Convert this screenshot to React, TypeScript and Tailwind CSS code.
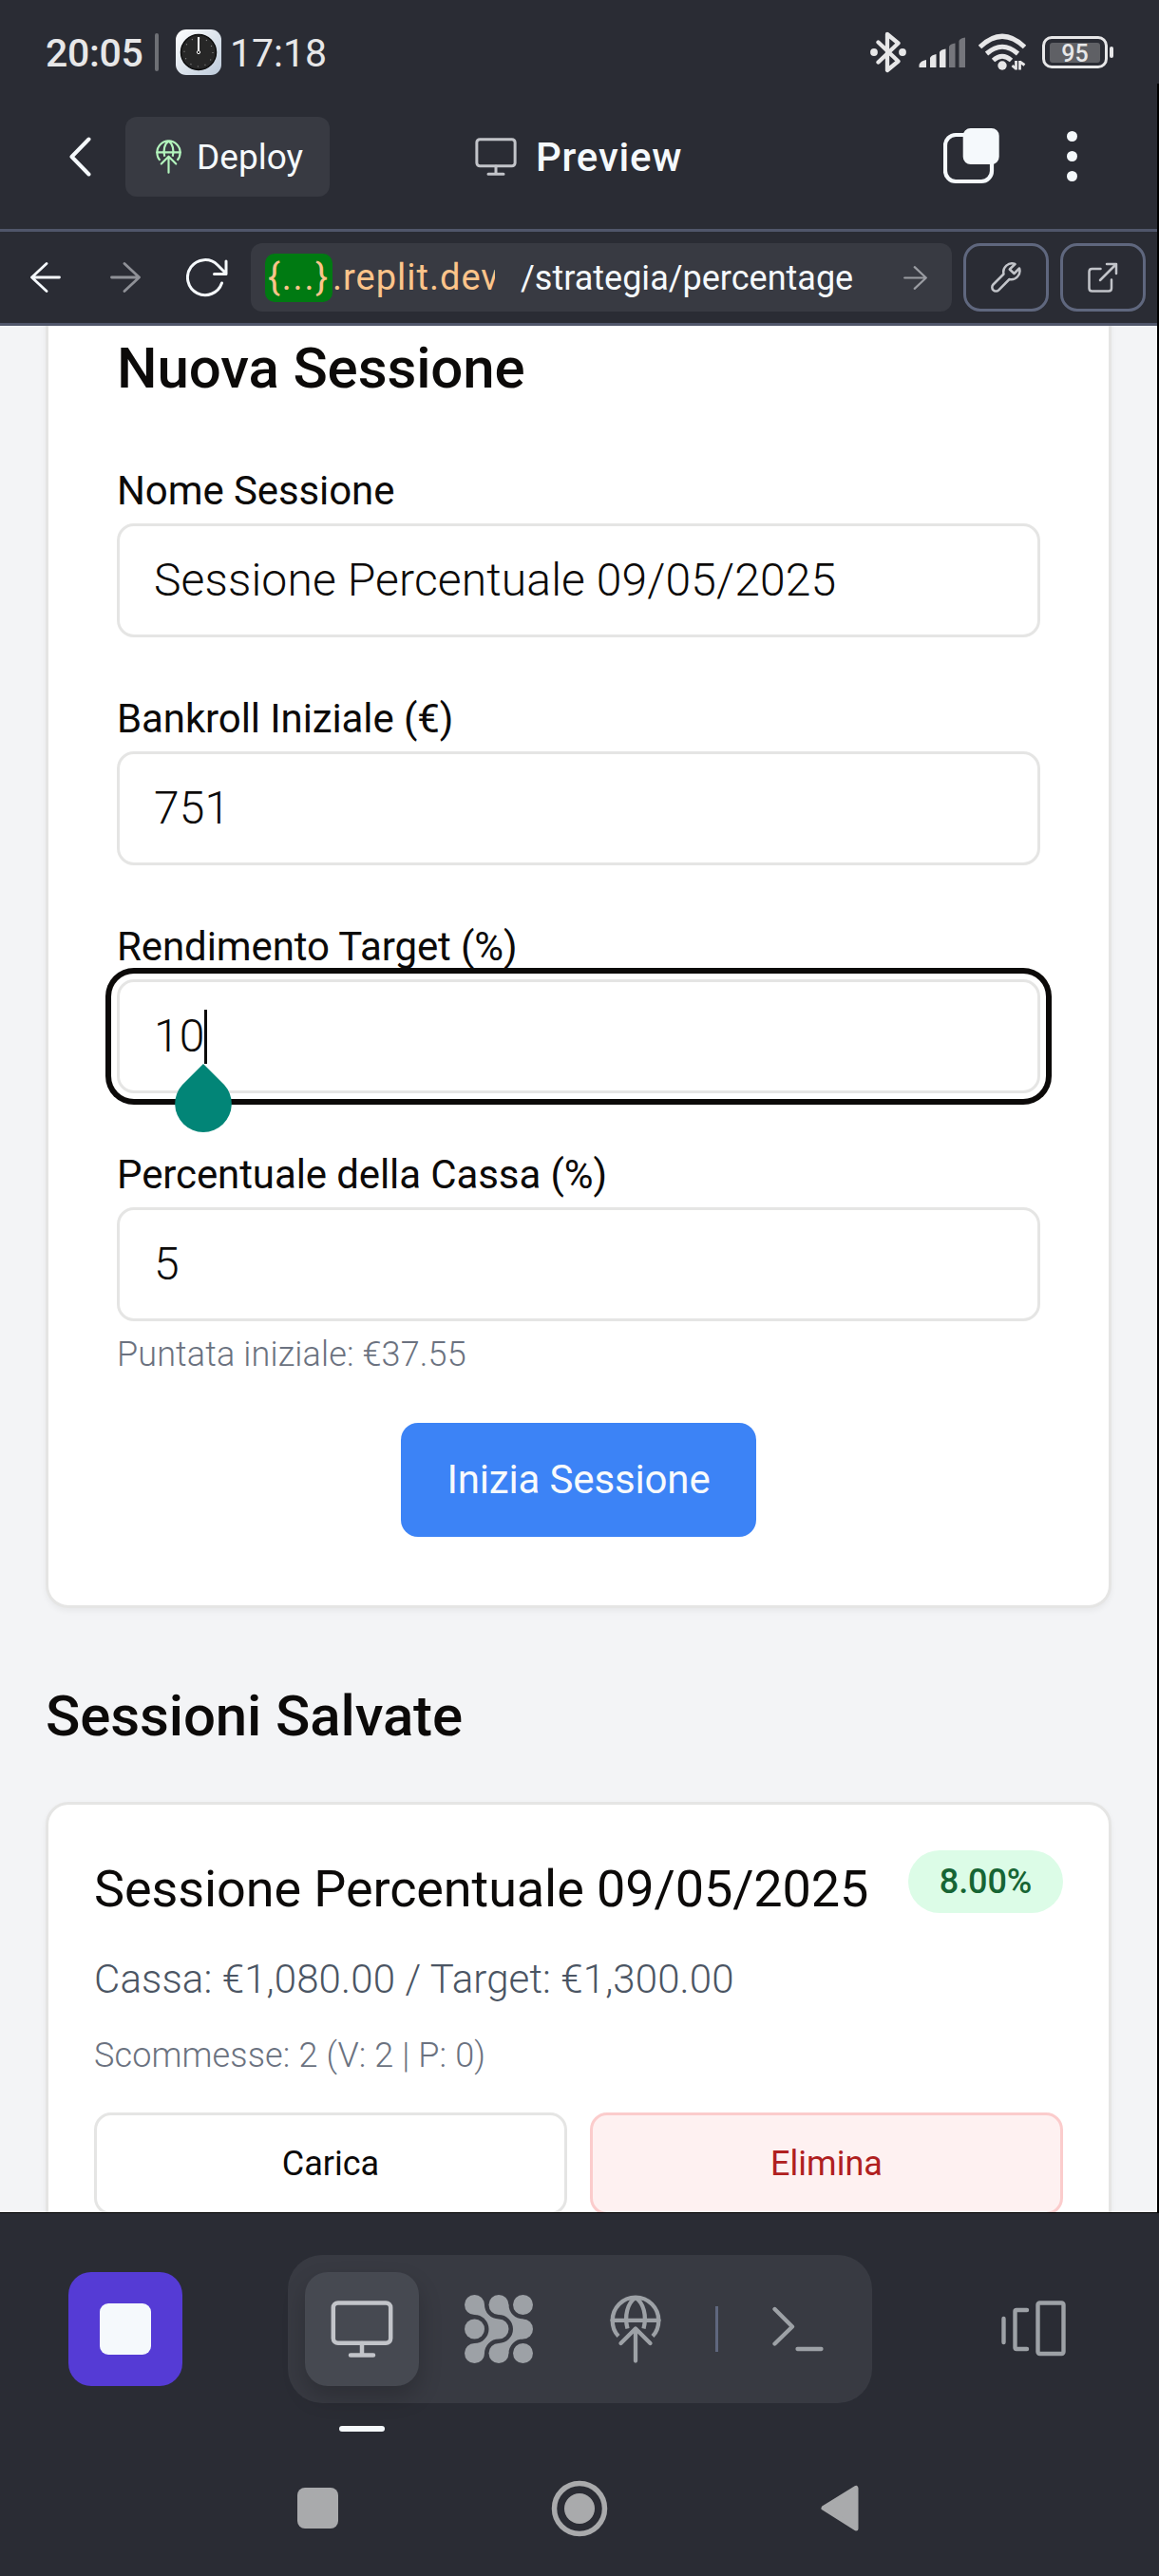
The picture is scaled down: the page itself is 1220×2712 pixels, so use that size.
import React from "react";

const MonitorIcon = ({ className, sw = 3 }: { className: string; sw?: number }) => (
  <svg viewBox="0 0 66 60" className={className} fill="none" stroke="currentColor" strokeWidth={sw} strokeLinecap="round" strokeLinejoin="round">
    <rect x="2.800" y="2.500" width="60.400" height="42.300" rx="5" />
    <path d="M33 45V57M21 57.500H45" />
  </svg>
);

const GlobeUp = ({ className }: { className: string }) => (
  <svg viewBox="0 0 54 72" className={className} fill="none" stroke="currentColor" strokeWidth="4.300" strokeLinecap="round" strokeLinejoin="round">
    <path strokeLinecap="butt" d="M9 43.500C4.500 39 2.700 33 2.700 27a24.300 24.300 0 0 1 48.600 0c0 6-1.800 12-6.300 16.500" />
    <path d="M2.500 26.800H51.500" />
    <path strokeLinecap="butt" d="M18.500 35.500C15 22 18.500 8.500 27 3M35.500 35.500C39 22 35.500 8.500 27 3" />
    <path d="M27 69.500V36M11.500 51L27 35.500L42.500 51" />
  </svg>
);

const Field = ({ label, value, focused }: { label: string; value: string; focused?: boolean }) => (
  <div className="mb-[42px] flex flex-col">
    <label className="flex h-[78px] items-center pt-[9px] text-[42px] leading-[60px] tracking-[-0.1px]">{label}</label>
    <div
      className={
        "relative flex h-[120px] items-center rounded-[18px] border-[3px] border-[#e5e5e4] bg-white px-[36px] text-[48px] font-light leading-[72px] tracking-[0.13px] " +
        (focused ? "shadow-[0_0_0_6px_#fff,0_0_0_12px_#0c0a09]" : "")
      }
    >
      {value}
      {focused && (
        <>
          <span className="-ml-[1px] h-[57px] w-[3px] bg-[#0c0a09]" />
          <svg viewBox="1 0 60 72" className="absolute left-[58px] top-[86px] h-[72px] w-[60px]" fill="#028577">
            <path d="M31 0L53 22A29.800 29.800 0 1 1 9 22Z" />
          </svg>
        </>
      )}
    </div>
  </div>
);

const StatusBar = () => (
  <div className="flex h-[110px] items-center pl-[48px] pr-[48px] text-[#e7e7e8]">
    <span className="w-[115px] pt-[3px] text-[41px] font-medium leading-none tracking-[-0.3px]">20:05</span>
    <span className="h-[40px] w-[4px] rounded bg-[#6e7075]" />
    <svg viewBox="0 0 48 48" className="ml-[18px] h-[48px] w-[48px]">
      <defs>
        <linearGradient id="clk" x1="0" y1="0" x2="1" y2="1">
          <stop offset="0" stopColor="#fff" />
          <stop offset="1" stopColor="#bccada" />
        </linearGradient>
      </defs>
      <rect width="48" height="48" rx="11" fill="url(#clk)" />
      <circle cx="24" cy="24" r="18.500" fill="#272727" stroke="#0c0c0c" strokeWidth="1.500" />
      <circle cx="24" cy="24" r="15" fill="none" stroke="#888" strokeWidth="1.200" strokeDasharray="1 6.854" />
      <path d="M24 24V8" stroke="#fff" strokeWidth="2" />
      <circle cx="24" cy="24" r="1.600" fill="#111" stroke="#fff" strokeWidth="1" />
    </svg>
    <span className="ml-[9px] pt-[3px] text-[41px] leading-none">17:18</span>
    <div className="ml-auto flex items-center">
      <svg viewBox="0 0 38 44" className="h-[44px] w-[38px]" fill="none" stroke="currentColor" strokeWidth="4.300" strokeLinejoin="round" strokeLinecap="round">
        <path d="M8.500 11.500L29.500 31.500L18 41V3L29.500 12.500L8.500 32.500" />
        <circle cx="4" cy="22" r="3.900" fill="currentColor" stroke="none" />
        <circle cx="34" cy="22" r="3.900" fill="currentColor" stroke="none" />
      </svg>
      <svg viewBox="0 0 50 33" className="ml-[13px] h-[33px] w-[50px]" fill="currentColor">
        <path d="M0.500 32V29Q2 25 8 24V32ZM12 32V22Q13 19 18.500 18V32ZM22 32V16Q23 13 28.500 12.500V32Z" />
        <path d="M32 32V10Q33 7 38.500 6.500V32ZM42.500 32V4Q43.500 1 49 0.500V32Z" opacity=".4" />
      </svg>
      <svg viewBox="0 0 50 40" className="ml-[13px] h-[40px] w-[50px]" fill="none" stroke="currentColor" strokeWidth="5">
        <path d="M1.500 14.500Q25-8 48.500 14.500M8.500 21.500Q25 7 41.500 21.500M15.500 28.500Q25 20 34.500 28.500" />
        <circle cx="25" cy="34" r="4.700" fill="currentColor" stroke="none" />
        <path d="M39.500 29V38.500M43.500 38.500V29M39.500 37.500L35.500 34M43.500 30L48.500 33.500" strokeWidth="2.800" />
      </svg>
      <div className="ml-[17px] flex h-[34px] w-[69px] items-center justify-center rounded-[10px] border-[3px] border-[#e7e7e8] px-[4px]">
        <span className="flex h-[21px] w-[53px] items-center justify-center rounded-[3px] bg-[#5f6065] pt-[2px] text-[25px] font-medium leading-none">95</span>
      </div>
      <span className="ml-[2px] h-[12px] w-[4px] rounded bg-[#e7e7e8]" />
    </div>
  </div>
);

const Header = () => (
  <div className="flex h-[131px] items-start pt-[13px] text-[#f5f9fc]">
    <svg viewBox="0 0 24 42" className="ml-[72px] mt-[21px] h-[42px] w-[24px]" fill="none" stroke="currentColor" strokeWidth="4" strokeLinecap="round" strokeLinejoin="round">
      <path d="M21.500 2.500L3.500 21L21.500 39.500" />
    </svg>
    <div className="ml-[36px] flex h-[84px] w-[215px] items-center rounded-[12px] bg-[#383a42] pl-[32px]">
      <GlobeUp className="h-[36px] w-[27px] text-[#b3f5bd]" />
      <span className="ml-[16px] text-[37px] leading-none">Deploy</span>
    </div>
    <div className="ml-[153px] flex h-[84px] items-center">
      <MonitorIcon className="h-[40px] w-[44px] text-[#c2c4c9]" sw={4.5} />
      <span className="ml-[20px] pt-[1px] text-[42px] font-medium leading-none tracking-[0.800px]">Preview</span>
    </div>
    <svg viewBox="0 0 60 60" className="ml-auto mt-[11px] h-[60px] w-[60px]">
      <rect x="2" y="8" width="49" height="49" rx="11" fill="none" stroke="currentColor" strokeWidth="4.200" />
      <rect x="20.700" y="1" width="38" height="38" rx="8" fill="currentColor" />
    </svg>
    <div className="ml-[70px] mr-[86px] mt-[15px] flex w-[11px] flex-col gap-[10px]">
      <span className="size-[11px] rounded-full bg-[#f5f9fc]" />
      <span className="size-[11px] rounded-full bg-[#f5f9fc]" />
      <span className="size-[11px] rounded-full bg-[#f5f9fc]" />
    </div>
  </div>
);

const Arrow = ({ className, flip }: { className: string; flip?: boolean }) => (
  <svg viewBox="0 0 32 32" className={className} fill="none" stroke="currentColor" strokeWidth="2.800" strokeLinecap="round" strokeLinejoin="round">
    <path d={flip ? "M30.500 16H1.500M17 1.500L1.500 16L17 30.500" : "M1.500 16H30.500M15 1.500L30.500 16L15 30.500"} />
  </svg>
);

const UrlBar = () => (
  <div className="flex h-[102px] items-center border-y-[3px] border-[#50566a] text-[#f5f9fc]">
    <Arrow flip className="ml-[32px] h-[32px] w-[32px]" />
    <Arrow className="ml-[52px] h-[32px] w-[32px] text-[#8f9197]" />
    <svg viewBox="0 0 44 42" className="ml-[48px] h-[42px] w-[44px]" fill="none" stroke="currentColor" strokeWidth="3" strokeLinecap="round" strokeLinejoin="round">
      <path d="M37.500 27A18.500 18.500 0 1 1 33 8L42 17M42 4V17.500H29.500" />
    </svg>
    <div className="ml-[24px] flex h-[72px] w-[738px] items-center rounded-[12px] bg-[#383a42] pl-[15px] text-[38px] leading-none">
      <div className="flex w-[242px] items-center overflow-hidden whitespace-nowrap text-[#fcc48a]">
        <span className="flex h-[51px] w-[71px] shrink-0 items-center justify-center rounded-[10px] bg-[#007a12] tracking-[1.800px]">{"{...}"}</span>
        <span className="leading-[51px] tracking-[1px]">.replit.dev</span>
      </div>
      <span className="ml-[27px] pt-[1px] text-[36px]">/strategia/percentage</span>
      <Arrow className="ml-auto mr-[26px] h-[25px] w-[25px] text-[#9a9ca2]" />
    </div>
    <div className="ml-[12px] flex h-[72px] w-[90px] items-center justify-center rounded-[18px] border-[3px] border-[#5f677e]">
      <svg viewBox="0 0 32 32" className="h-[32px] w-[32px] text-[#c2c4c9]" fill="none" stroke="currentColor" strokeWidth="2.500" strokeLinejoin="round">
        <path d="M25.500 2A9 9 0 0 0 13.500 12.500L2.500 23.500A3.900 3.900 0 0 0 8.300 29.300L19.500 18A9 9 0 0 0 30 6.500L24.500 12L19.800 7.500Z" />
      </svg>
    </div>
    <div className="ml-[12px] flex h-[72px] w-[90px] items-center justify-center rounded-[18px] border-[3px] border-[#5f677e]">
      <svg viewBox="0 0 32 32" className="h-[32px] w-[32px] text-[#c2c4c9]" fill="none" stroke="currentColor" strokeWidth="2.500" strokeLinecap="round" strokeLinejoin="round">
        <path d="M13.500 7H4.500Q1.500 7 1.500 10V27.500Q1.500 30.500 4.500 30.500H22Q25 30.500 25 27.500V18.500M20 2H30V12M30 2L13 19" />
      </svg>
    </div>
  </div>
);

const Card = ({ className, children }: { className: string; children: React.ReactNode }) => (
  <div className={"rounded-[24px] border-[3px] border-[#e5e5e4] bg-white shadow-[0_3px_6px_rgba(0,0,0,0.05)] " + className}>{children}</div>
);

const Content = () => (
  <main className="flex h-[1986px] flex-col overflow-hidden bg-[#f3f4f6] pl-[48px] pr-[50px] text-[#0c0a09]">
    <Card className="-mt-[72px] shrink-0 px-[72px] pb-[72px] pt-[72px]">
      <h2 className="mb-[43px] text-[60px] font-medium leading-[84px] tracking-[-0.12px]">Nuova Sessione</h2>
      <Field label="Nome Sessione" value="Sessione Percentuale 09/05/2025" />
      <Field label="Bankroll Iniziale (€)" value="751" />
      <Field label="Rendimento Target (%)" value="10" focused />
      <Field label="Percentuale della Cassa (%)" value="5" />
      <p className="-mt-[31px] text-[36px] font-light leading-[48px] tracking-[0.13px] text-[#6b7280]">Puntata iniziale: €37.55</p>
      <div className="mt-[48px] flex justify-center">
        <button className="h-[120px] w-[374px] rounded-[18px] bg-[#3c83f6] text-[42px] leading-[60px] tracking-[-0.15px] text-[#f8fafc]">Inizia Sessione</button>
      </div>
    </Card>
    <h2 className="mb-[48px] mt-[72px] shrink-0 text-[60px] font-medium leading-[84px] tracking-[-0.12px]">Sessioni Salvate</h2>
    <Card className="shrink-0 p-[48px]">
      <div className="flex items-start justify-between">
        <h3 className="text-[54px] leading-[82px] tracking-[-0.1px]">Sessione Percentuale 09/05/2025</h3>
        <span className="flex h-[66px] w-[163px] items-center justify-center rounded-full bg-[#dcfce7] text-[36px] font-medium leading-[48px] tracking-[-0.1px] text-[#166534]">8.00%</span>
      </div>
      <p className="mt-[24px] text-[42px] font-light leading-[60px] tracking-[0.12px] text-[#4b5563]">Cassa: €1,080.00 / Target: €1,300.00</p>
      <p className="mt-[26px] text-[36px] font-light leading-[48px] tracking-[0.13px] text-[#6b7280]">Scommesse: 2 (V: 2 | P: 0)</p>
      <div className="mt-[36px] flex gap-[24px]">
        <button className="h-[108px] flex-1 rounded-[18px] border-[3px] border-[#e5e5e4] bg-white text-[36px]">Carica</button>
        <button className="h-[108px] flex-1 rounded-[18px] border-[3px] border-[#fbcccc] bg-[#fef1f1] text-[36px] text-[#b02020]">Elimina</button>
      </div>
    </Card>
  </main>
);

const AgentIcon = () => (
  <svg viewBox="0 0 72 72" className="h-[72px] w-[72px]" fill="currentColor">
    <circle cx="10.500" cy="10.500" r="10.500" />
    <circle cx="36" cy="10.500" r="10.500" />
    <circle cx="61.500" cy="10.500" r="10.500" />
    <circle cx="10.500" cy="36" r="10.500" />
    <circle cx="61.500" cy="36" r="10.500" />
    <circle cx="10.500" cy="61.500" r="10.500" />
    <circle cx="36" cy="61.500" r="10.500" />
    <circle cx="61.500" cy="61.500" r="10.500" />
    <path d="M21 10.500A15 15 0 0 0 36 25.500A10.500 10.500 0 0 1 36 46.500A15 15 0 0 0 21 61.500L10.500 51A15 15 0 0 0 10.500 21Z" />
    <path d="M46.500 10.500A15 15 0 0 0 61.500 25.500V46.500A15 15 0 0 0 46.500 61.500L36 51A15 15 0 0 0 36 21Z" />
  </svg>
);

const Dock = () => (
  <div className="flex h-[230px] items-start border-t border-black pt-[44px]">
    <div className="ml-[72px] mt-[18px] flex size-[120px] items-center justify-center rounded-[24px] bg-[#553bd5]">
      <span className="size-[54px] rounded-[9px] bg-[#f5f9fc]" />
    </div>
    <div className="ml-[111px] flex h-[156px] w-[615px] items-center rounded-[36px] bg-[#383a42] px-[18px] text-[#9da1a6]">
      <div className="relative flex size-[120px] items-center justify-center rounded-[24px] bg-[#464951] shadow-[0_12px_24px_rgba(0,0,0,0.2)]">
        <MonitorIcon className="h-[60px] w-[66px] text-[#c2c4c9]" sw={4.5} />
        <span className="absolute left-[36px] top-[162px] h-[6px] w-[48px] rounded-full bg-[#f5f9fc]" />
      </div>
      <div className="ml-[48px]"><AgentIcon /></div>
      <GlobeUp className="ml-[81px] h-[72px] w-[54px]" />
      <span className="ml-[57px] h-[48px] w-[3px] bg-[#5f677e]" />
      <svg viewBox="0 0 54 48" className="ml-[57px] h-[48px] w-[54px]" fill="none" stroke="currentColor" strokeWidth="4.300" strokeLinecap="round" strokeLinejoin="round">
        <path d="M2.500 3L21 21.500L2.500 39.500M26.500 45H51.500" />
      </svg>
    </div>
    <svg viewBox="0 0 68 60" className="ml-[136px] mt-[47px] h-[60px] w-[68px] text-[#9da1a6]" fill="none" stroke="currentColor" strokeWidth="4.400" strokeLinecap="round" strokeLinejoin="round">
      <path d="M2.500 20V45M27 11H16Q14.500 11 14.500 12.500V50.500Q14.500 52 16 52H27" />
      <rect x="38.500" y="3.500" width="27" height="53.500" rx="2" />
    </svg>
  </div>
);

const NavBar = () => (
  <div className="flex h-[153px] items-start text-[#a9aaac]">
    <span className="ml-[313px] mt-[60px] size-[43px] rounded-[8px] bg-[#a9aaac]" />
    <svg viewBox="0 0 60 60" className="ml-[224px] mt-[52px] size-[60px]">
      <circle cx="30" cy="30" r="26.500" fill="none" stroke="currentColor" strokeWidth="5.500" />
      <circle cx="30" cy="30" r="16" fill="currentColor" />
    </svg>
    <svg viewBox="0 0 41 50" className="ml-[223px] mt-[57px] h-[50px] w-[41px]" fill="currentColor" stroke="currentColor" strokeWidth="5" strokeLinejoin="round">
      <path d="M38 3.500V46L4 24.500Z" />
    </svg>
  </div>
);

export default function App() {
  return (
    <div className="relative h-[2712px] w-[1220px] overflow-hidden bg-[#2a2c34] font-['Roboto','Noto_Sans',sans-serif]">
      <StatusBar />
      <Header />
      <UrlBar />
      <Content />
      <Dock />
      <NavBar />
      <span className="absolute right-0 top-[88px] h-[2241px] w-[2px] bg-black" />
    </div>
  );
}
